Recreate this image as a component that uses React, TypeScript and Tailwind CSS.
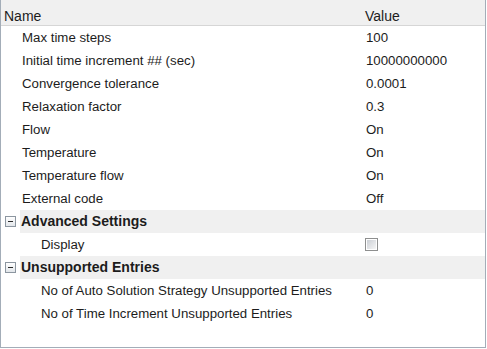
const rows = [
  ["Max time steps", "100"],
  ["Initial time increment ## (sec)", "10000000000"],
  ["Convergence tolerance", "0.0001"],
  ["Relaxation factor", "0.3"],
  ["Flow", "On"],
  ["Temperature", "On"],
  ["Temperature flow", "On"],
  ["External code", "Off"],
]

const unsupported = [
  ["No of Auto Solution Strategy Unsupported Entries", "0"],
  ["No of Time Increment Unsupported Entries", "0"],
]

const Minus = () => (
  <div className="w-[11px] h-[11px] border border-[#8c96a0] bg-gradient-to-b from-[#ffffff] to-[#e2e6ea] flex items-center justify-center">
    <div className="w-[5px] h-[1px] bg-[#2b2b2b]" />
  </div>
)

const Row = ({ label, value, indent }: { label: string; value: string; indent: string }) => (
  <div className="flex h-[23px] items-center leading-[23px]">
    <div className={`w-[365px] ${indent}`}>{label}</div>
    <div>{value}</div>
  </div>
)

const Section = ({ title }: { title: string }) => (
  <div className="flex h-[23px] items-center">
    <div className="w-[19px] flex pl-[4px]">
      <Minus />
    </div>
    <div className="flex-1 h-full bg-[#f0f0f0] font-bold leading-[23px] text-[14px] pl-[1px]">{title}</div>
  </div>
)

export default function App() {
  return (
    <div className="w-[487px] h-[349px] bg-white" style={{ fontFamily: '"Liberation Sans", Arial, sans-serif' }}>
      <div className="w-[486px] h-[348px] border-l border-r border-b border-[#a3adb8] text-[13.25px] text-[#1c1c1c] overflow-hidden">
        <div className="flex h-[26px] bg-[#f0f0f0] border-b border-[#d6d6d6] text-[14px] leading-[16px] pt-[8px]">
          <div className="w-[364px] pl-[3px]">Name</div>
          <div>Value</div>
        </div>
        {rows.map(([l, v]) => (
          <Row key={l} label={l} value={v} indent="pl-[21px]" />
        ))}
        <Section title="Advanced Settings" />
        <div className="flex h-[23px] items-center leading-[23px]">
          <div className="w-[364px] pl-[40px]">Display</div>
          <div className="w-[13px] h-[13px] border border-[#8e8f8f] p-[1px] bg-white">
            <div className="w-full h-full bg-gradient-to-br from-[#cbcfd5] to-[#f6f6f6]" />
          </div>
        </div>
        <Section title="Unsupported Entries" />
        {unsupported.map(([l, v]) => (
          <Row key={l} label={l} value={v} indent="pl-[40px]" />
        ))}
      </div>
    </div>
  )
}
